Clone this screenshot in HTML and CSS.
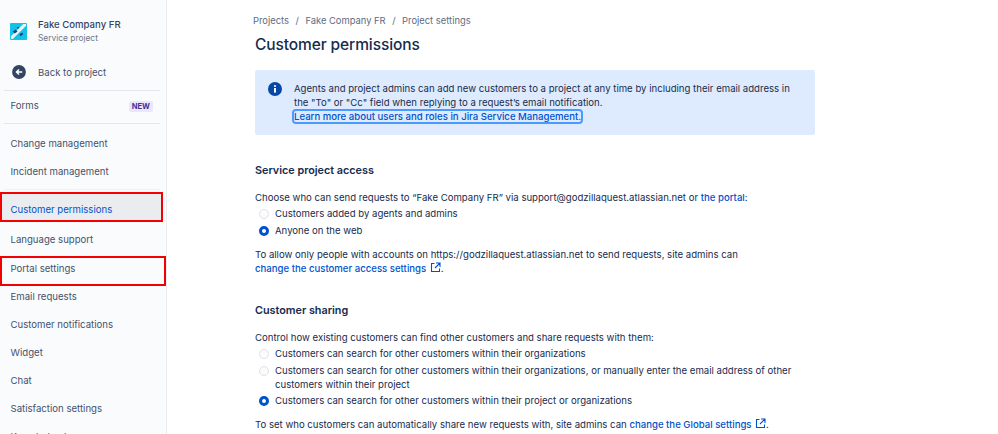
FILE: index.html
```
<!DOCTYPE html>
<html lang="en">
<head>
<meta charset="utf-8">
<title>Customer permissions</title>
<link rel="stylesheet" href="styles.css">
</head>
<body>
<div class="app">
  <nav class="side">
    <div class="proj">
      <svg class="logo" width="17" height="17" viewBox="0 0 18 18"><rect width="18" height="18" rx="1" fill="#12c2e9"/><path d="M3 17 L17 3 V1 H14 L1 14 V17Z" fill="#e4f7fb"/><path d="M3 9l3-2 2 2-3 2z M10 12l3-2 1 2-3 2z M7 5l2-1 1 1-2 1z" fill="#1d3f73"/></svg>
      <div class="proj-text"><div class="proj-name">Fake Company FR</div><div class="proj-sub">Service project</div></div>
    </div>
    <div class="back">
      <svg width="14" height="14" viewBox="0 0 15 15"><circle cx="7.5" cy="7.5" r="7.4" fill="#344563"/><path d="M11 7.5H5M7.5 4.8L4.8 7.5l2.7 2.7" fill="none" stroke="#fff" stroke-width="1.6"/></svg>
      <span>Back to project</span>
    </div>
    <div class="rule"></div>
    <div class="item forms"><span>Forms</span><span class="new">NEW</span></div>
    <div class="rule"></div>
    <div class="item first">Change management</div>
    <div class="item">Incident management</div>
    <div class="rule thin"></div>
    <div class="item active">Customer permissions</div>
    <div class="item">Language support</div>
    <div class="item portal">Portal settings</div>
    <div class="item">Email requests</div>
    <div class="item">Customer notifications</div>
    <div class="item">Widget</div>
    <div class="item">Chat</div>
    <div class="item">Satisfaction settings</div>
    <div class="item">Knowledge base</div>
  </nav>
  <main class="main">
    <div class="crumbs"><span>Projects</span><span>/</span><span>Fake Company FR</span><span>/</span><span>Project settings</span></div>
    <h1>Customer permissions</h1>
    <div class="banner">
      <svg class="info" width="14" height="14" viewBox="0 0 14 14"><circle cx="7" cy="7" r="7" fill="#0747a6"/><rect x="6" y="6" width="2" height="4.6" fill="#fff"/><circle cx="7" cy="4" r="1.1" fill="#fff"/></svg>
      <p>Agents and project admins can add new customers to a project at any time by including their email address in the "To" or "Cc" field when replying to a request’s email notification.<br><a class="focus" href="#">Learn more about users and roles in Jira Service Management.</a></p>
    </div>
    <h2>Service project access</h2>
    <p class="lead">Choose who can send requests to “Fake Company FR” via support@godzillaquest.atlassian.net or <a class="strong" href="#">the portal</a>:</p>
    <div class="radio"><i class="dot"></i><span>Customers added by agents and admins</span></div>
    <div class="radio"><i class="dot on"></i><span>Anyone on the web</span></div>
    <p class="note">To allow only people with accounts on https://godzillaquest.atlassian.net to send requests, site admins can<br><a class="strong" href="#">change the customer access settings <svg class="ext" width="11" height="11" viewBox="0 0 11 11"><path d="M4.5 1.5H1.5v8h8V6.5M6 1h4v4M10 1L5 6" fill="none" stroke="#0052cc" stroke-width="1.1"/></svg></a>.</p>
    <h2 class="h-sharing">Customer sharing</h2>
    <p class="lead">Control how existing customers can find other customers and share requests with them:</p>
    <div class="radio"><i class="dot"></i><span>Customers can search for other customers within their organizations</span></div>
    <div class="radio"><i class="dot"></i><span>Customers can search for other customers within their organizations, or manually enter the email address of other customers within their project</span></div>
    <div class="radio"><i class="dot on"></i><span>Customers can search for other customers within their project or organizations</span></div>
    <p class="note">To set who customers can automatically share new requests with, site admins can <a class="strong" href="#">change the Global settings <svg class="ext" width="11" height="11" viewBox="0 0 11 11"><path d="M4.5 1.5H1.5v8h8V6.5M6 1h4v4M10 1L5 6" fill="none" stroke="#0052cc" stroke-width="1.1"/></svg></a>.</p>
  </main>
</div>
</body>
</html>
```
FILE: styles.css
```
html, body { margin: 0; height: 100%; overflow: hidden; background: #fff; }
body { font-family: Inter, "Liberation Sans", sans-serif; font-size: 9.6px; color: #172b4d; }
.app { display: flex; height: 434px; overflow: hidden; }
.side { width: 166px; flex: none; background: #fafbfc; border-right: 1px solid #ebecf0; padding-top: 17px; color: #42526e; }
.proj { display: flex; align-items: center; gap: 11px; padding-left: 10px; height: 28px; }
.proj-name { font-weight: 500; line-height: 14px; color: #344563; }
.proj-sub { font-size: 8.4px; line-height: 12px; color: #6b778c; }
.back { display: flex; align-items: center; gap: 12px; height: 18px; margin: 18px 0 9px; padding-left: 12px; }
.rule { height: 1px; background: #e4e6ea; margin: 0 6px 0 4px; }
.rule.thin { margin-top: 3px; background: #f0f1f4; }
.item { height: 28px; line-height: 28px; padding-left: 10.5px; }
.forms { display: flex; justify-content: space-between; align-items: center; padding-right: 13px; margin: 1px 0 3px; }
.new { background: #eae6ff; color: #403294; font-weight: 700; font-size: 7.6px; line-height: 11px; padding: 0 3px; border-radius: 2px; }
.first { margin-top: 6px; }
.active { box-sizing: border-box; width: 163px; height: 30px; line-height: 36px; margin: 2px 0 4px; color: #0052cc; background: #ebecf0; outline: 2px solid #f30000; outline-offset: -2px; }
.portal { box-sizing: border-box; height: 30px; line-height: 26px; margin: 2px 0 -3px; outline: 2px solid #f30000; outline-offset: -2px; }
.main { padding-left: 88px; width: 560px; flex: none; }
.crumbs { display: flex; gap: 6.5px; margin-left: -2px; padding-top: 14px; line-height: 14px; color: #5e6c84; font-size: 9.4px; }
h1 { margin: 6px 0 0; font-size: 15.5px; font-weight: 500; line-height: 22px; color: #172b4d; letter-spacing: -0.1px; }
.banner { display: flex; gap: 12px; margin-top: 14px; height: 65px; box-sizing: border-box; background: #deebff; border-radius: 2px; padding: 12px 19px 0 13px; }
.info { flex: none; }
.banner p { margin: 0; line-height: 14px; }
a { color: #0052cc; text-decoration: none; }
.strong { font-weight: 500; }
.focus { font-weight: 500; outline: 2px solid #4c9aff; outline-offset: 0; border-radius: 2px; }
h2 { margin: 28px 0 0; font-size: 10.8px; font-weight: 600; line-height: 16px; }
.h-sharing { margin-top: 27px; }
.lead { margin: 12px 0 0; line-height: 14px; }
.radio { display: flex; align-items: flex-start; gap: 6px; line-height: 14px; margin-top: 2.4px; padding-left: 4px; }
.dot { flex: none; width: 8px; height: 8px; margin-top: 2px; border-radius: 50%; border: 1px solid #dfe1e6; background: #fafbfc; }
.dot.on { background: #fff; border: 3px solid #0052cc; width: 4px; height: 4px; }
.note { margin: 10px 0 0; line-height: 14px; }
.ext { vertical-align: -1px; margin-left: 1px; }
```
